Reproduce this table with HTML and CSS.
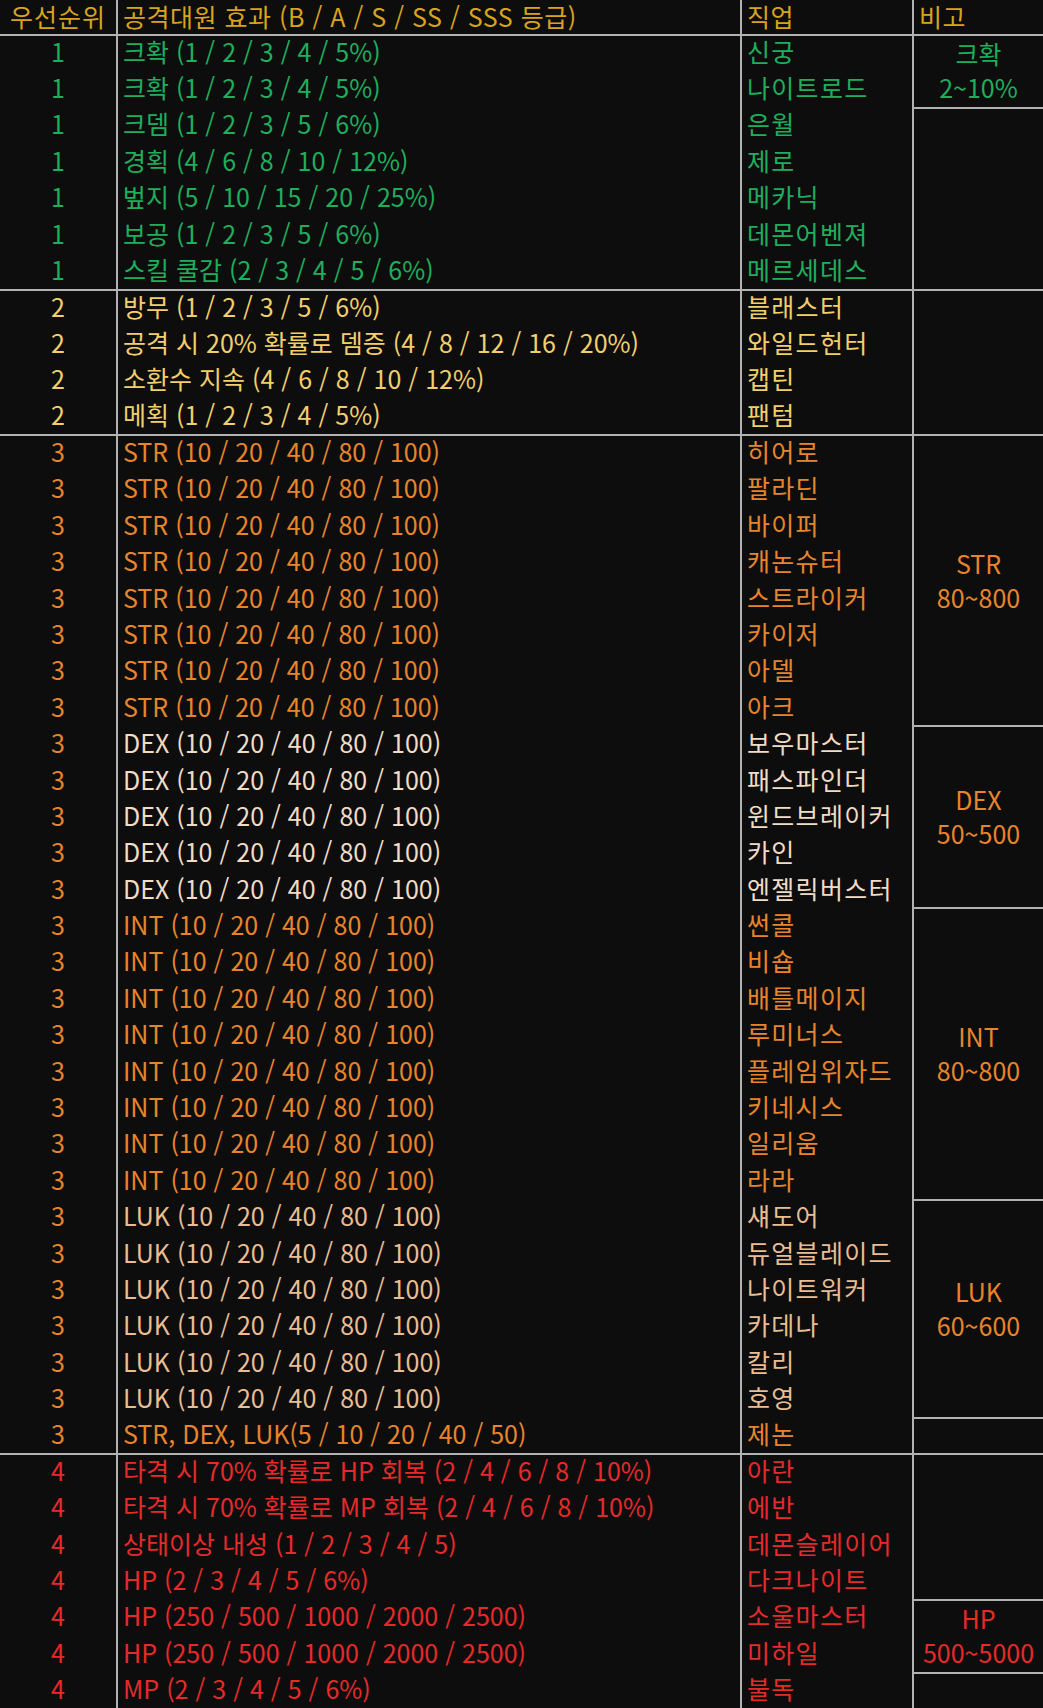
FILE: index.html
```html
<!DOCTYPE html>
<html lang="ko">
<head>
<meta charset="utf-8">
<title>공격대원 효과</title>
<link rel="stylesheet" href="styles.css">
</head>
<body>
<table class="tbl">
  <colgroup>
    <col class="w1"><col class="w2"><col class="w3"><col class="w4">
  </colgroup>
  <thead>
    <tr class="head">
      <th class="c1 ctr">우선순위</th>
      <th class="c2">공격대원 효과 (B / A / S / SS / SSS 등급)</th>
      <th class="c3">직업</th>
      <th class="c4">비고</th>
    </tr>
  </thead>
  <tbody>
    <tr class="g gs"><td class="c1">1</td><td class="c2">크확 (1 / 2 / 3 / 4 / 5%)</td><td class="c3">신궁</td><td class="note" rowspan="2">크확<br>2~10%</td></tr>
    <tr class="g"><td class="c1">1</td><td class="c2">크확 (1 / 2 / 3 / 4 / 5%)</td><td class="c3">나이트로드</td></tr>
    <tr class="g"><td class="c1">1</td><td class="c2">크뎀 (1 / 2 / 3 / 5 / 6%)</td><td class="c3">은월</td><td class="note" rowspan="5"></td></tr>
    <tr class="g"><td class="c1">1</td><td class="c2">경획 (4 / 6 / 8 / 10 / 12%)</td><td class="c3">제로</td></tr>
    <tr class="g"><td class="c1">1</td><td class="c2">벞지 (5 / 10 / 15 / 20 / 25%)</td><td class="c3">메카닉</td></tr>
    <tr class="g"><td class="c1">1</td><td class="c2">보공 (1 / 2 / 3 / 5 / 6%)</td><td class="c3">데몬어벤져</td></tr>
    <tr class="g"><td class="c1">1</td><td class="c2">스킬 쿨감 (2 / 3 / 4 / 5 / 6%)</td><td class="c3">메르세데스</td></tr>

    <tr class="y gs"><td class="c1">2</td><td class="c2">방무 (1 / 2 / 3 / 5 / 6%)</td><td class="c3">블래스터</td><td class="note" rowspan="4"></td></tr>
    <tr class="y"><td class="c1">2</td><td class="c2">공격 시 20% 확률로 뎀증 (4 / 8 / 12 / 16 / 20%)</td><td class="c3">와일드헌터</td></tr>
    <tr class="y"><td class="c1">2</td><td class="c2">소환수 지속 (4 / 6 / 8 / 10 / 12%)</td><td class="c3">캡틴</td></tr>
    <tr class="y"><td class="c1">2</td><td class="c2">메획 (1 / 2 / 3 / 4 / 5%)</td><td class="c3">팬텀</td></tr>

    <tr class="o gs"><td class="c1">3</td><td class="c2">STR (10 / 20 / 40 / 80 / 100)</td><td class="c3">히어로</td><td class="note on" rowspan="8">STR<br>80~800</td></tr>
    <tr class="o"><td class="c1">3</td><td class="c2">STR (10 / 20 / 40 / 80 / 100)</td><td class="c3">팔라딘</td></tr>
    <tr class="o"><td class="c1">3</td><td class="c2">STR (10 / 20 / 40 / 80 / 100)</td><td class="c3">바이퍼</td></tr>
    <tr class="o"><td class="c1">3</td><td class="c2">STR (10 / 20 / 40 / 80 / 100)</td><td class="c3">캐논슈터</td></tr>
    <tr class="o"><td class="c1">3</td><td class="c2">STR (10 / 20 / 40 / 80 / 100)</td><td class="c3">스트라이커</td></tr>
    <tr class="o"><td class="c1">3</td><td class="c2">STR (10 / 20 / 40 / 80 / 100)</td><td class="c3">카이저</td></tr>
    <tr class="o"><td class="c1">3</td><td class="c2">STR (10 / 20 / 40 / 80 / 100)</td><td class="c3">아델</td></tr>
    <tr class="o"><td class="c1">3</td><td class="c2">STR (10 / 20 / 40 / 80 / 100)</td><td class="c3">아크</td></tr>
    <tr class="w"><td class="c1">3</td><td class="c2">DEX (10 / 20 / 40 / 80 / 100)</td><td class="c3">보우마스터</td><td class="note on" rowspan="5">DEX<br>50~500</td></tr>
    <tr class="w"><td class="c1">3</td><td class="c2">DEX (10 / 20 / 40 / 80 / 100)</td><td class="c3">패스파인더</td></tr>
    <tr class="w"><td class="c1">3</td><td class="c2">DEX (10 / 20 / 40 / 80 / 100)</td><td class="c3">윈드브레이커</td></tr>
    <tr class="w"><td class="c1">3</td><td class="c2">DEX (10 / 20 / 40 / 80 / 100)</td><td class="c3">카인</td></tr>
    <tr class="w"><td class="c1">3</td><td class="c2">DEX (10 / 20 / 40 / 80 / 100)</td><td class="c3">엔젤릭버스터</td></tr>
    <tr class="o"><td class="c1">3</td><td class="c2">INT (10 / 20 / 40 / 80 / 100)</td><td class="c3">썬콜</td><td class="note on" rowspan="8">INT<br>80~800</td></tr>
    <tr class="o"><td class="c1">3</td><td class="c2">INT (10 / 20 / 40 / 80 / 100)</td><td class="c3">비숍</td></tr>
    <tr class="o"><td class="c1">3</td><td class="c2">INT (10 / 20 / 40 / 80 / 100)</td><td class="c3">배틀메이지</td></tr>
    <tr class="o"><td class="c1">3</td><td class="c2">INT (10 / 20 / 40 / 80 / 100)</td><td class="c3">루미너스</td></tr>
    <tr class="o"><td class="c1">3</td><td class="c2">INT (10 / 20 / 40 / 80 / 100)</td><td class="c3">플레임위자드</td></tr>
    <tr class="o"><td class="c1">3</td><td class="c2">INT (10 / 20 / 40 / 80 / 100)</td><td class="c3">키네시스</td></tr>
    <tr class="o"><td class="c1">3</td><td class="c2">INT (10 / 20 / 40 / 80 / 100)</td><td class="c3">일리움</td></tr>
    <tr class="o"><td class="c1">3</td><td class="c2">INT (10 / 20 / 40 / 80 / 100)</td><td class="c3">라라</td></tr>
    <tr class="t"><td class="c1">3</td><td class="c2">LUK (10 / 20 / 40 / 80 / 100)</td><td class="c3">섀도어</td><td class="note on" rowspan="6">LUK<br>60~600</td></tr>
    <tr class="t"><td class="c1">3</td><td class="c2">LUK (10 / 20 / 40 / 80 / 100)</td><td class="c3">듀얼블레이드</td></tr>
    <tr class="t"><td class="c1">3</td><td class="c2">LUK (10 / 20 / 40 / 80 / 100)</td><td class="c3">나이트워커</td></tr>
    <tr class="t"><td class="c1">3</td><td class="c2">LUK (10 / 20 / 40 / 80 / 100)</td><td class="c3">카데나</td></tr>
    <tr class="t"><td class="c1">3</td><td class="c2">LUK (10 / 20 / 40 / 80 / 100)</td><td class="c3">칼리</td></tr>
    <tr class="t"><td class="c1">3</td><td class="c2">LUK (10 / 20 / 40 / 80 / 100)</td><td class="c3">호영</td></tr>
    <tr class="o"><td class="c1">3</td><td class="c2">STR, DEX, LUK(5 / 10 / 20 / 40 / 50)</td><td class="c3">제논</td><td class="note"></td></tr>

    <tr class="r gs"><td class="c1">4</td><td class="c2">타격 시 70% 확률로 HP 회복 (2 / 4 / 6 / 8 / 10%)</td><td class="c3">아란</td><td class="note" rowspan="4"></td></tr>
    <tr class="r"><td class="c1">4</td><td class="c2">타격 시 70% 확률로 MP 회복 (2 / 4 / 6 / 8 / 10%)</td><td class="c3">에반</td></tr>
    <tr class="r"><td class="c1">4</td><td class="c2">상태이상 내성 (1 / 2 / 3 / 4 / 5)</td><td class="c3">데몬슬레이어</td></tr>
    <tr class="r"><td class="c1">4</td><td class="c2">HP (2 / 3 / 4 / 5 / 6%)</td><td class="c3">다크나이트</td></tr>
    <tr class="r"><td class="c1">4</td><td class="c2">HP (250 / 500 / 1000 / 2000 / 2500)</td><td class="c3">소울마스터</td><td class="note" rowspan="2">HP<br>500~5000</td></tr>
    <tr class="r"><td class="c1">4</td><td class="c2">HP (250 / 500 / 1000 / 2000 / 2500)</td><td class="c3">미하일</td></tr>
    <tr class="r"><td class="c1">4</td><td class="c2">MP (2 / 3 / 4 / 5 / 6%)</td><td class="c3">불독</td><td class="note"></td></tr>
  </tbody>
</table>
</body>
</html>
```
FILE: styles.css
```css
html, body {
  margin: 0;
  padding: 0;
  background: #0d0d0d;
}

.tbl {
  width: 1043px;
  table-layout: fixed;
  border-collapse: collapse;
  font-family: "Noto Sans CJK KR", "Noto Sans", sans-serif;
  font-size: 25px;
  letter-spacing: 0;
}

.w1 { width: 117px; }
.w2 { width: 624px; }
.w3 { width: 172px; }
.w4 { width: 130px; }

th, td {
  padding: 0 0 5px 5px;
  white-space: nowrap;
  vertical-align: middle;
  line-height: 28px;
  font-weight: 400;
}

.head th {
  height: 31px;
  line-height: 28px;
  padding-bottom: 3px;
  color: #d9a31d;
  text-align: left;
  letter-spacing: 0.5px;
  border-bottom: 2px solid #b2b2b2;
}

.head .ctr { text-align: center; padding: 0 0 3px 0; letter-spacing: 1px; }

tbody tr { height: 36.4px; }

.c1, .c2, .c3 { border-right: 2px solid #b2b2b2; }
td.c1 { text-align: center; padding: 0 0 5px 0; }
td.c3 { letter-spacing: 1.3px; }

.gs td { border-top: 2px solid #b2b2b2; }

.note {
  text-align: center;
  padding: 0 0 2px 0;
  line-height: 34px;
  border-top: 2px solid #b2b2b2;
  border-bottom: 2px solid #b2b2b2;
}

/* row colours */
.g td { color: #1fae5c; }
.y td { color: #f3cf6c; }
.o td { color: #e8852c; }
.w td { color: #f1dcc6; }
.t td { color: #eabd93; }
.r td { color: #e62a2a; }

.w td.c1, .t td.c1, .note.on { color: #e8852c; }
```
